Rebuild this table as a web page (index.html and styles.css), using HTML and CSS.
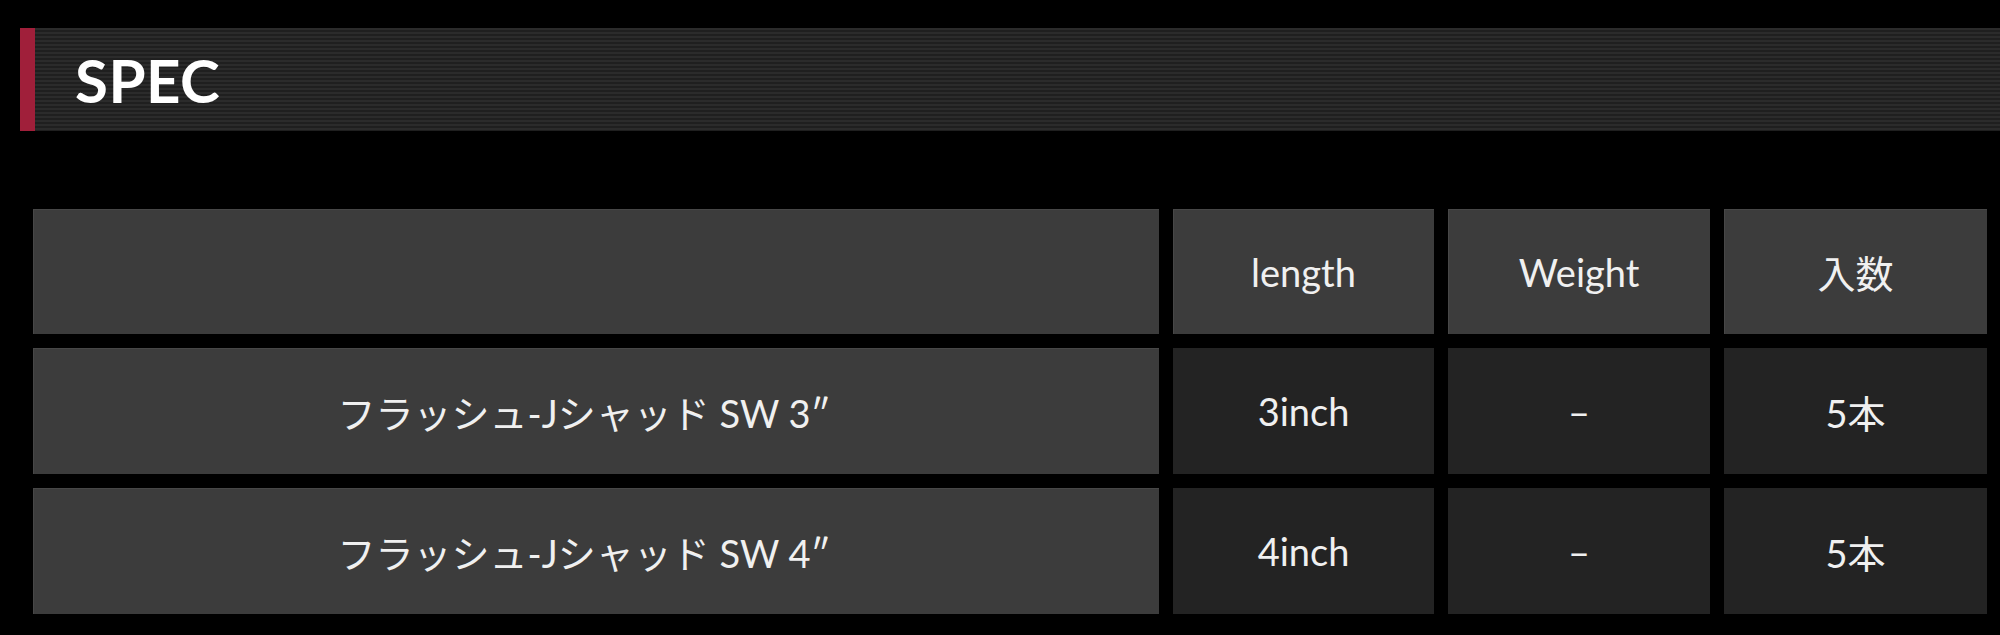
FILE: index.html
```html
<!DOCTYPE html>
<html lang="ja">
<head>
<meta charset="utf-8">
<title>SPEC</title>
<link rel="stylesheet" href="styles.css">
</head>
<body>
<div class="page">
  <h2 class="section-title"><span class="section-title__text">SPEC</span></h2>
  <table class="spec">
    <colgroup>
      <col class="spec__col-name">
      <col class="spec__col-val">
      <col class="spec__col-val2">
      <col class="spec__col-val3">
    </colgroup>
    <thead>
      <tr>
        <th class="spec__head"></th>
        <th class="spec__head">length</th>
        <th class="spec__head">Weight</th>
        <th class="spec__head">入数</th>
      </tr>
    </thead>
    <tbody>
      <tr>
        <th class="spec__name"><span class="spec__name-text">フラッシュ-Jシャッド SW 3″</span></th>
        <td class="spec__cell">3inch</td>
        <td class="spec__cell">–</td>
        <td class="spec__cell">5本</td>
      </tr>
      <tr>
        <th class="spec__name"><span class="spec__name-text">フラッシュ-Jシャッド SW 4″</span></th>
        <td class="spec__cell">4inch</td>
        <td class="spec__cell">–</td>
        <td class="spec__cell">5本</td>
      </tr>
    </tbody>
  </table>
</div>
</body>
</html>
```

FILE: styles.css
```css
html, body {
  margin: 0;
  padding: 0;
  background: #000;
}

body {
  width: 2000px;
  height: 635px;
  overflow: hidden;
  font-family: Lato, "Noto Sans CJK JP", sans-serif;
  color: #f2f2f2;
}

.page {
  padding-top: 28px;
}

.section-title {
  margin: 0 0 0 20px;
  height: 103px;
  display: flex;
  align-items: center;
  border-left: 15px solid #a01f3a;
  background: repeating-linear-gradient(
    to bottom,
    #2b2b2b 0px,
    #2b2b2b 2px,
    #1f1f1f 2px,
    #1f1f1f 4px
  );
  box-sizing: border-box;
}

.section-title__text {
  margin-left: 40px;
  font-family: Lato, "Open Sans", sans-serif;
  font-weight: 700;
  font-size: 60px;
  line-height: 1;
  color: #fff;
  letter-spacing: 0.5px;
}

.spec {
  margin: 64px 0 0 19px;
  border-collapse: separate;
  border-spacing: 14px;
  table-layout: fixed;
  width: 1981px;
  border: 0;
}

.spec__col-name { width: 1126px; }
.spec__col-val { width: 261px; }
.spec__col-val2 { width: 262px; }
.spec__col-val3 { width: 263px; }

.spec th,
.spec td {
  padding: 0;
  text-align: center;
  vertical-align: middle;
  font-weight: 400;
  font-size: 38px;
  color: #f0f0f0;
}

.spec__head {
  height: 125px;
  background: #3c3c3c;
  box-shadow: inset 1px 1px 0 #474747;
}

.spec .spec__name {
  height: 126px;
  background: #3c3c3c;
  font-size: 38px;
  box-shadow: inset 1px 1px 0 #474747;
}

.spec__name-text {
  display: inline-block;
  margin-right: 24px;
}

.spec__cell {
  background: #232323;
}
```
